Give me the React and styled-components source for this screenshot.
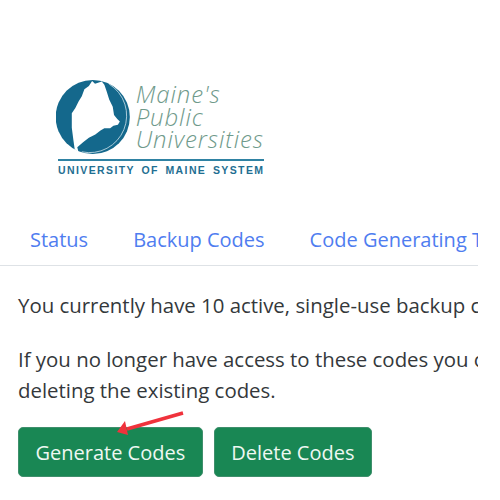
import styled, { createGlobalStyle } from 'styled-components';

const GlobalStyle = createGlobalStyle`
  html, body {
    margin: 0;
    padding: 0;
    background: #ffffff;
  }
`;

const Page = styled.div`
  width: 478px;
  height: 500px;
  overflow: hidden;
  font-family: 'Open Sans', 'Liberation Sans', sans-serif;
  font-size: 20px;
  color: #34383b;
`;

const Logo = styled.div`
  width: 208px;
  margin-left: 56px;
  padding-top: 78px;
  display: flex;
  flex-direction: column;
`;

const LogoTop = styled.div`
  display: flex;
  gap: 5.5px;
  align-items: flex-start;
`;

const LogoWords = styled.div`
  padding-top: 5px;
  font-family: 'Open Sans', 'Liberation Sans', sans-serif;
  font-style: italic;
  font-weight: 300;
  font-size: 24px;
  line-height: 22.5px;
  letter-spacing: 0.9px;
  color: #6f9a8b;
  white-space: nowrap;
`;

const LogoRule = styled.div`
  height: 2px;
  margin: 3px 0 0 2px;
  background: #2f82a3;
`;

const LogoSystem = styled.div`
  margin: 3px 0 0 2px;
  font-family: 'Liberation Sans', sans-serif;
  font-weight: 700;
  font-size: 10.5px;
  line-height: 12px;
  letter-spacing: 1.4px;
  word-spacing: 2.3px;
  color: #1f6f92;
  white-space: nowrap;
`;

const Tabs = styled.nav`
  display: flex;
  margin-top: 42px;
  padding-left: 7.5px;
  border-bottom: 1px solid #dee2e6;
  white-space: nowrap;
`;

const Tab = styled.a`
  padding: 8px 22.5px 12px;
  line-height: 27px;
  color: #4f7df0;
`;

const Body = styled.div`
  padding: 24px 0 0 18px;
`;

const Paragraph = styled.p`
  margin: 0 0 ${(p) => p.$gap}px;
  font-size: 20.4px;
  line-height: 31px;
  white-space: nowrap;
`;

const Actions = styled.div`
  position: relative;
  display: flex;
  gap: 11px;
  margin-top: 21px;
`;

const Button = styled.button`
  height: 50px;
  padding: 0 16.5px;
  border: 1px solid #3f8f6c;
  border-radius: 5px;
  background: #198754;
  color: #eef8f2;
  font: inherit;
`;

const Arrow = styled.svg`
  position: absolute;
  left: 95px;
  top: -17px;
  width: 75px;
  height: 26px;
`;

const MaineMark = () => (
  <svg width="77" height="78" viewBox="48 55 230 234">
    <circle cx="162" cy="172" r="115" fill="#14688c" />
    <path d="M 215 72 A 115 115 0 0 1 130 282" fill="none" stroke="#cfe2ea" strokeWidth="2.5" transform="translate(-2 -2)" />
    <path
      d="M160 60 L169 69 L190 62 L198 72 L205 92 L213 118 L224 140 L228 166 L238 178 L246 186 L240 196 L226 199 L216 207 L198 207 L186 214 L170 226 L150 236 L132 250 L114 266 L118 281 L106 272 L102 244 L97 205 L97 160 L108 144 L118 124 L128 108 L136 86 L150 76 Z"
      fill="#ffffff"
    />
  </svg>
);

const App = () => (
  <>
    <GlobalStyle />
    <Page>
      <Logo>
        <LogoTop>
          <MaineMark />
          <LogoWords>
            Maine's
            <br />
            Public
            <br />
            Universities
          </LogoWords>
        </LogoTop>
        <LogoRule />
        <LogoSystem>UNIVERSITY OF MAINE SYSTEM</LogoSystem>
      </Logo>
      <Tabs>
        <Tab>Status</Tab>
        <Tab>Backup Codes</Tab>
        <Tab>Code Generating Tool</Tab>
      </Tabs>
      <Body>
        <Paragraph $gap={23}>You currently have 10 active, single-use backup codes remaining.</Paragraph>
        <Paragraph $gap={0}>
          If you no longer have access to these codes you can generate a new set by
          <br />
          deleting the existing codes.
        </Paragraph>
        <Actions>
          <Button>Generate Codes</Button>
          <Button>Delete Codes</Button>
          <Arrow viewBox="0 0 75 26">
            <path d="M70 3 L14 19" stroke="#f0323c" strokeWidth="3.5" fill="none" />
            <path d="M4 22 L12 11 L15 25 Z" fill="#f0323c" />
          </Arrow>
        </Actions>
      </Body>
    </Page>
  </>
);

export default App;
